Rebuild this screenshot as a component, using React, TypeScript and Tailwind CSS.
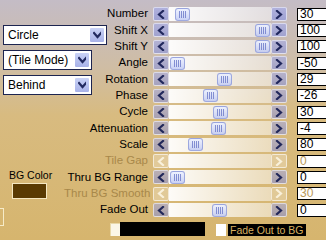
const ROWS = [
  { label: 'Number', value: '30', thumb: 6 },
  { label: 'Shift X', value: '100', thumb: 86 },
  { label: 'Shift Y', value: '100', thumb: 86 },
  { label: 'Angle', value: '-50', thumb: 1 },
  { label: 'Rotation', value: '29', thumb: 48 },
  { label: 'Phase', value: '-26', thumb: 34 },
  { label: 'Cycle', value: '30', thumb: 44 },
  { label: 'Attenuation', value: '-4', thumb: 42 },
  { label: 'Scale', value: '80', thumb: 19 },
  { label: 'Tile Gap', value: '0', thumb: null, disabled: true },
  { label: 'Thru BG Range', value: '0', thumb: 1 },
  { label: 'Thru BG Smooth', value: '30', thumb: null, disabled: true },
  { label: 'Fade Out', value: '0', thumb: 43 },
]

const DROPDOWNS = [
  { text: 'Circle', width: 'w-[104px]' },
  { text: '(Tile Mode)', width: 'w-[89px]' },
  { text: 'Behind', width: 'w-[89px]' },
]

function Chevron({ dir, disabled }: { dir: 'left' | 'right' | 'down'; disabled?: boolean }) {
  const d =
    dir === 'left' ? 'M6 1 L2 4.5 L6 8' : dir === 'right' ? 'M2 1 L6 4.5 L2 8' : 'M1 2 L4.5 6 L8 2'
  return (
    <svg width="8" height="9" viewBox="0 0 8 9">
      <path
        d={d}
        fill="none"
        stroke={disabled ? 'rgba(255,250,235,0.8)' : 'rgba(18,26,80,0.9)'}
        strokeWidth="2.2"
        strokeLinecap="square"
      />
    </svg>
  )
}

function ArrowButton({ dir, disabled }: { dir: 'left' | 'right'; disabled?: boolean }) {
  return (
    <div
      className={`w-4 h-[14px] shrink-0 rounded-[2px] border border-white/60 flex items-center justify-center ${
        disabled ? 'bg-white/25' : 'bg-[linear-gradient(to_bottom,rgba(150,165,255,0.45),rgba(110,130,240,0.45))]'
      }`}
    >
      <Chevron dir={dir} disabled={disabled} />
    </div>
  )
}

function Slider({ thumb, disabled }: { thumb: number | null; disabled?: boolean }) {
  return (
    <div className="flex items-center h-[14px] w-[134px]">
      <ArrowButton dir="left" disabled={disabled} />
      <div className="flex-1 h-[14px] flex items-center bg-[linear-gradient(to_right,rgba(255,255,255,0.95),rgba(255,255,255,0.5))]">
        {thumb !== null && (
          <div
            className="h-[13px] w-[15px] rounded-[3px] border border-[#8c98d8]/80 bg-[linear-gradient(to_bottom,rgba(235,240,255,0.9),rgba(190,200,245,0.8))] flex items-center justify-center gap-px"
            style={{ marginLeft: thumb }}
          >
            {[0, 1, 2, 3].map((i) => (
              <div key={i} className="w-px h-[7px] bg-[#6a78c8]/80" />
            ))}
          </div>
        )}
      </div>
      <ArrowButton dir="right" disabled={disabled} />
    </div>
  )
}

export default function App() {
  return (
    <div className="w-[326px] h-[240px] overflow-hidden relative flex font-['Liberation_Sans',Arial,sans-serif] bg-[linear-gradient(to_bottom,#c4bcc6_0%,#cfbda4_28%,#d8bb80_48%,#d6b56e_100%)]">
      {/* Left panel */}
      <div className="w-[64px] shrink-0 flex flex-col pl-[3px] pt-[25px]">
        <div className="flex flex-col gap-[5px]">
          {DROPDOWNS.map((dd) => (
            <div
              key={dd.text}
              className={`${dd.width} h-[20px] shrink-0 bg-white border border-[#1c2450] flex items-center pl-[4px] pr-px`}
            >
              <span className="flex-1 text-[12px] text-black leading-none">{dd.text}</span>
              <div className="w-4 h-4 rounded-[2px] bg-[linear-gradient(to_bottom,#c9d2f6,#a8b2e8)] border border-white flex items-center justify-center">
                <Chevron dir="down" />
              </div>
            </div>
          ))}
        </div>
        <div className="mt-[75px] ml-[6px] text-[10.5px] text-black leading-none whitespace-nowrap">BG Color</div>
        <div className="mt-[2px] ml-[9px] w-[35px] h-[16px] bg-[#5a3a02] border border-[#f4e6c0]" />
        <div className="mt-[9px] -ml-[9px] w-[10px] h-[18px] border border-[#f6ebc8]" />
      </div>

      {/* Sliders */}
      <div className="flex-1 flex flex-col pt-[6px]">
        {ROWS.map((row) => (
          <div key={row.label} className="h-[16.33px] flex items-center shrink-0">
            <div
              className={`w-[84px] text-right text-[11.5px] leading-none whitespace-nowrap ${
                row.disabled ? 'text-[#a8884a]' : 'text-black'
              }`}
            >
              {row.label}
            </div>
            <div className="ml-[5px]">
              <Slider thumb={row.thumb} disabled={row.disabled} />
            </div>
            <div
              className={`ml-[10px] w-[32px] h-[13px] shrink-0 bg-white border border-black pl-[2px] text-[12px] leading-[11px] ${
                row.disabled ? 'text-[#b89858]' : 'text-black'
              }`}
            >
              {row.value}
            </div>
          </div>
        ))}
        <div className="mt-[4px] flex items-end h-[14px] ml-[46px]">
          <div className="w-[10px] h-[13px] shrink-0 bg-[#fbf6e6] border-l border-t border-[#e8d8a8]" />
          <div className="w-[85px] h-[14px] shrink-0 bg-black" />
          <div className="ml-[11px] w-[10px] h-[12px] shrink-0 bg-white" />
          <div className="ml-[2px] w-[78px] h-[12px] shrink-0 bg-black text-[#d8b060] text-[10.5px] leading-[12px] pl-[2px] whitespace-nowrap overflow-hidden">
            Fade Out to BG
          </div>
        </div>
      </div>
    </div>
  )
}
